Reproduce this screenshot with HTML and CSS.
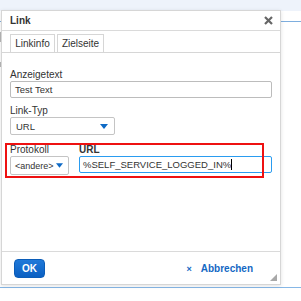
FILE: index.html
```html
<!DOCTYPE html>
<html lang="de">
<head>
  <meta charset="UTF-8" />
  <title>Link</title>
  <link rel="stylesheet" href="styles.css">
</head>
<body>
  <div class="page">
    <div class="page-top"></div>
    <div class="page-rule"></div>
    <div class="page-marks">
      <span class="mark"></span>
      <span class="mark short"></span>
    </div>
    <div class="page-rule bottom"></div>
  </div>

  <div class="dialog">
    <div class="dialog-head">
      <span class="dialog-title">Link</span>
      <svg class="dialog-close" width="9" height="9" viewBox="0 0 9 9">
        <path d="M1 1 L8 8 M8 1 L1 8" stroke="#666" stroke-width="2.2" />
      </svg>
    </div>

    <div class="dialog-body">
      <div class="tabs">
        <div class="tab active">Linkinfo</div>
        <div class="tab second">Zielseite</div>
      </div>

      <div class="panel">
        <div class="field">
          <label class="label">Anzeigetext</label>
          <div class="input">Test Text</div>
        </div>

        <div class="field">
          <label class="label">Link-Typ</label>
          <div class="select wide">
            <span>URL</span>
            <svg class="arrow" width="8" height="5" viewBox="0 0 8 5"><path d="M0 0 H8 L4 5 Z" fill="#0e6ac6" /></svg>
          </div>
        </div>

        <div class="row">
          <div class="field">
            <label class="label">Protokoll</label>
            <div class="select narrow">
              <span>&lt;andere&gt;</span>
              <svg class="arrow" width="7" height="5" viewBox="0 0 8 5"><path d="M0 0 H8 L4 5 Z" fill="#0e6ac6" /></svg>
            </div>
          </div>
          <div class="field grow">
            <label class="label strong">URL</label>
            <div class="input focus">%SELF_SERVICE_LOGGED_IN%<span class="caret"></span></div>
          </div>
          <div class="highlight"></div>
        </div>
      </div>
    </div>

    <div class="dialog-foot">
      <button class="btn-ok">OK</button>
      <a class="btn-cancel"><span class="x">×</span>Abbrechen</a>
    </div>
    <div class="grip"></div>
  </div>
</body>
</html>
```

FILE: styles.css
```css
body {
  margin: 0;
  background: #ffffff;
  font-family: 'Liberation Sans', Arial, sans-serif;
  color: #333333;
  width: 301px;
  height: 301px;
  overflow: hidden;
  position: relative;
}

/* page behind the dialog */
.page-top {
  height: 11px;
  background: #eef3fb;
}

.page-rule {
  height: 1px;
  margin-top: 10px;
  background: #7eaede;
}

.page-rule.bottom {
  margin-top: 220px;
  background: #86b7e6;
}

.page-marks {
  display: flex;
  flex-direction: column;
  gap: 20px;
  padding-top: 10px;
}

.mark {
  width: 1px;
  height: 10px;
  background: #b8b8b8;
}

.mark.short {
  height: 5px;
}

/* dialog */
.dialog {
  position: absolute;
  left: 1px;
  top: 10px;
  width: 280px;
  height: 275px;
  box-sizing: border-box;
  border: 1px solid #d6d6d6;
  background: #ffffff;
  box-shadow: 0 1px 4px rgba(0, 0, 0, 0.12);
  display: flex;
  flex-direction: column;
}

.dialog-head {
  height: 19px;
  flex: none;
  padding: 0 7px 0 8px;
  border-bottom: 1px solid #dadada;
  display: flex;
  align-items: center;
  justify-content: space-between;
}

.dialog-title {
  font-size: 10px;
  font-weight: bold;
  color: #333;
}

.dialog-body {
  flex: 1;
  padding: 3px 8px 0;
}

.tabs {
  display: flex;
  gap: 2px;
  margin: 0 -8px;
  padding: 0 8px;
  border-bottom: 1px solid #d6d6d6;
}

.tab {
  width: 45px;
  height: 18px;
  box-sizing: border-box;
  border: 1px solid #d6d6d6;
  border-bottom: none;
  font-size: 10px;
  line-height: 18px;
  text-align: center;
  color: #333;
}

.tab.second {
  width: 47px;
}

.panel {
  padding-top: 16px;
  display: flex;
  flex-direction: column;
  gap: 7px;
}

.field {
  display: flex;
  flex-direction: column;
}

.label {
  font-size: 10px;
  line-height: 12px;
  color: #333;
}

.label.strong {
  font-weight: bold;
}

.input {
  height: 17px;
  box-sizing: border-box;
  border: 1px solid #bcbcbc;
  border-radius: 2px;
  padding: 0 4px;
  font-size: 9.5px;
  line-height: 15px;
  color: #333;
}

.input.focus {
  border-color: #2a9cf0;
  padding-left: 3px;
}

.caret {
  display: inline-block;
  width: 1px;
  height: 11px;
  background: #000;
  vertical-align: -2px;
}

.select {
  height: 18px;
  box-sizing: border-box;
  border: 1px solid #c4c4c4;
  border-radius: 2px;
  padding: 0 6px 0 4px;
  font-size: 9.5px;
  display: flex;
  align-items: center;
  justify-content: space-between;
}

.select.wide {
  width: 105px;
  padding-left: 5px;
}

.select.narrow {
  width: 59px;
  height: 19px;
  padding: 0 5px 0 4px;
  font-size: 9px;
}

.row {
  position: relative;
  margin-top: 2px;
  display: flex;
  gap: 10px;
}

.grow {
  flex: 1;
}

.highlight {
  position: absolute;
  left: -5px;
  top: -1px;
  width: 259px;
  height: 35px;
  box-sizing: border-box;
  border: 2px solid #ee1111;
}

.dialog-foot {
  flex: none;
  height: 32px;
  border-top: 1px solid #dadada;
  padding: 0 27px 0 12px;
  display: flex;
  align-items: center;
  justify-content: space-between;
}

.btn-ok {
  width: 31px;
  height: 19px;
  padding: 0;
  border: 1px solid #0b5db8;
  border-radius: 4px;
  background: linear-gradient(#2079d9, #0a60c2);
  color: #ffffff;
  font-family: 'Liberation Sans', Arial, sans-serif;
  font-size: 10px;
  font-weight: bold;
}

.btn-cancel {
  color: #1368c4;
  font-size: 10px;
  font-weight: bold;
}

.btn-cancel .x {
  font-size: 9px;
  margin-right: 9px;
}

.grip {
  position: absolute;
  right: 3px;
  bottom: 3px;
  width: 0;
  height: 0;
  border-left: 7px solid transparent;
  border-bottom: 7px solid #a8a8a8;
}
```
